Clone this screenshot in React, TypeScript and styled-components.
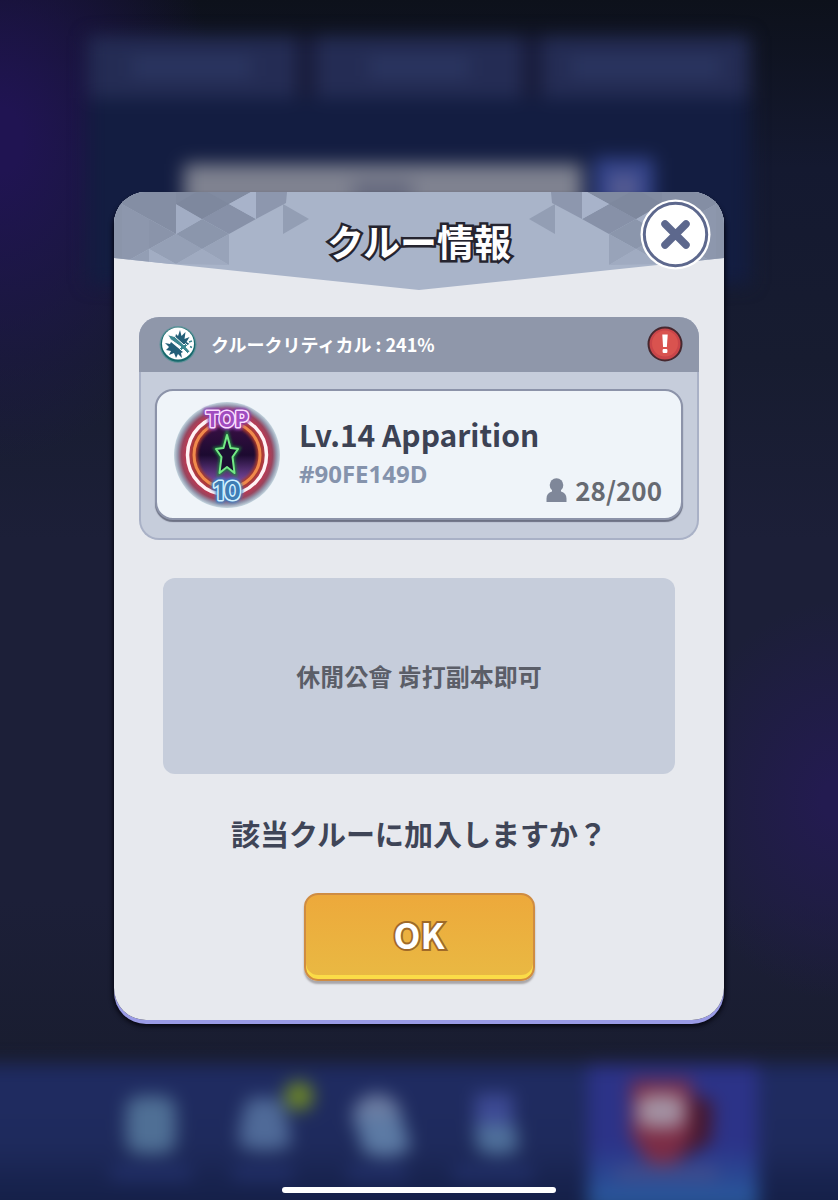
import React from "react";
import styled, { createGlobalStyle } from "styled-components";

const jp = `"Noto Sans CJK JP", "Noto Sans", sans-serif`;
const tc = `"Noto Sans CJK TC", "Noto Sans", sans-serif`;

const GlobalStyle = createGlobalStyle`
  *, *::before, *::after { box-sizing: border-box; }
  body { margin: 0; background: #181b35; font-family: ${jp}; }
  h1, h2, p { margin: 0; }
  button { font: inherit; padding: 0; cursor: pointer; }
`;

const Page = styled.div`
  display: grid;
  grid-template-columns: minmax(0, 1fr);
  min-height: 100vh;
  overflow: hidden;
  background:
    radial-gradient(ellipse 220px 320px at 0 140px, #201452 10%, transparent),
    radial-gradient(ellipse 160px 200px at 100% 800px, #231b50 10%, transparent),
    linear-gradient(#0d111b 0, #141930 14%, #171c30 30%, #1c1f38 45%, #1c1f38 75%, #191d30 88%);
`;

const Scene = styled.div`
  grid-area: 1 / 1;
  display: flex;
  flex-direction: column;
  justify-content: space-between;
  filter: blur(9px);
`;

const Lobby = styled.div`
  width: 79%;
  margin: 36px auto 0;
  background: #131d41;
  padding-bottom: 64px;
`;

const Tabs = styled.div`
  display: grid;
  grid-template-columns: repeat(3, 1fr);
  gap: 18px;
  background: #171a38;
`;

const Tab = styled.div`
  display: grid;
  place-items: center;
  height: 62px;
  background: #242c54;
`;

const TabLabel = styled.span<{ $width: number }>`
  width: ${(p) => p.$width}px;
  height: 20px;
  background: #2b3661;
`;

const SearchRow = styled.div`
  display: flex;
  justify-content: center;
  gap: 12px;
  margin-top: 66px;
`;

const SearchField = styled.div`
  display: grid;
  place-items: center;
  width: 60%;
  height: 56px;
  background: #7f8290;
`;

const SearchText = styled.span`
  width: 60px;
  height: 20px;
  background: #62667c;
`;

const SearchGo = styled.div`
  display: grid;
  place-items: center;
  width: 60px;
  height: 60px;
  margin-top: -6px;
  background: #33438a;
`;

const SearchGlyph = styled.span`
  width: 28px;
  height: 28px;
  background: #565c92;
`;

const Nav = styled.div`
  display: flex;
  justify-content: center;
  align-items: stretch;
  height: 148px;
  margin: 0 -24px -12px;
  padding-left: 14px;
  background: linear-gradient(#1f2b62 0, #1e2a5c 55%, #16214b 85%);
`;

const NavItem = styled.div<{ $active?: boolean }>`
  display: flex;
  justify-content: center;
  width: ${(p) => (p.$active ? 170 : 114)}px;
  margin-left: ${(p) => (p.$active ? 38 : 0)}px;
  padding: ${(p) => (p.$active ? "16px 12px 0 0" : "26px 0 0")};
  background: ${(p) => (p.$active ? "linear-gradient(#2c3388 0 55%, #29569a 90%)" : "none")};
`;

const HomeBar = styled.div`
  grid-area: 1 / 1;
  place-self: end center;
  width: 274px;
  height: 6px;
  margin-bottom: 7px;
  border-radius: 3px;
  background: #fff;
  z-index: 1;
`;

const Overlay = styled.div`
  grid-area: 1 / 1;
  display: flex;
  align-items: center;
  justify-content: center;
  padding: 12px 24px 0;
  z-index: 1;
`;

const DialogEdge = styled.div`
  width: 100%;
  max-width: 610px;
  border-radius: 32px;
  box-shadow: 0 4px 0 #9a9be6, 0 5px 5px 1px #04040e;
`;

const Dialog = styled.section`
  border-radius: 32px;
  background: #e7e9ee;
  overflow: hidden;
`;

const Header = styled.header`
  position: relative;
  display: grid;
  grid-template-columns: minmax(0, 1fr);
  height: 98px;
`;

const HeaderArt = styled.svg`
  grid-area: 1 / 1;
  width: 100%;
  height: 98px;
`;

const Title = styled.h1`
  grid-area: 1 / 1;
  place-self: center;
  font-size: 37px;
  line-height: 56px;
  font-weight: 700;
  color: #fff;
  -webkit-text-stroke: 5px #25242f;
  paint-order: stroke fill;
  stroke-linejoin: round;
`;

const CloseButton = styled.button`
  position: absolute;
  top: 7px;
  right: 13px;
  width: 71px;
  height: 71px;
  border: 0;
  background: none;
  svg { display: block; }
`;

const Body = styled.div`
  display: flex;
  flex-direction: column;
  align-items: center;
  padding: 27px 25px 39px;
`;

const Panel = styled.div`
  width: 100%;
  border: 2px solid #a9b1c6;
  border-top: 0;
  border-radius: 20px;
  background: #c6cddb;
`;

const BuffBar = styled.div`
  display: flex;
  align-items: center;
  gap: 14px;
  height: 55px;
  margin: 0 -2px;
  padding: 0 16px 2px 20px;
  border-radius: 20px 20px 0 0;
  background: #8f97aa;
  color: #fff;
  font-size: 18px;
  font-weight: 700;
  line-height: 24px;
`;

const BuffText = styled.p`
  flex: 1;
`;

const AlertButton = styled.button`
  width: 36px;
  height: 36px;
  border: 0;
  background: none;
  svg { display: block; }
`;

const CrewCard = styled.div`
  display: flex;
  align-items: center;
  gap: 19px;
  margin: 17px 14px 18px;
  height: 131px;
  padding: 0 19px 0 17px;
  border: 2px solid #8c93a9;
  border-radius: 18px;
  background: #eff4f9;
  box-shadow: 0 2px 1px #6c7183;
`;

const CrewText = styled.div`
  flex: 1;
  min-width: 0;
  align-self: stretch;
  padding-top: 24px;
`;

const CrewName = styled.h2`
  font-size: 30px;
  font-weight: 700;
  line-height: 38px;
  color: #3c4254;
`;

const CrewMeta = styled.div`
  display: flex;
  justify-content: space-between;
  height: 54px;
`;

const CrewTag = styled.p`
  font-family: "Open Sans", sans-serif;
  font-size: 24px;
  font-weight: 700;
  line-height: 42px;
  color: #8593ac;
`;

const Members = styled.p`
  align-self: flex-end;
  display: flex;
  align-items: center;
  gap: 8px;
  font-size: 26px;
  font-weight: 700;
  line-height: 34px;
  color: #666a72;
`;

const Message = styled.div`
  display: grid;
  place-items: center;
  width: calc(100% - 48px);
  height: 196px;
  margin-top: 38px;
  padding: 0 16px;
  border-radius: 12px;
  background: #c6cddb;
  color: #5b5e68;
  font-family: ${tc};
  font-size: 24px;
  font-weight: 700;
  line-height: 36px;
`;

const Question = styled.p`
  margin-top: 39px;
  font-size: 29px;
  font-weight: 700;
  line-height: 40px;
  color: #3f4557;
  text-align: center;
`;

const OkButton = styled.button`
  width: 231px;
  height: 88px;
  margin-top: 40px;
  padding-bottom: 6px;
  border: 2px solid #cf8c42;
  border-radius: 14px;
  background: linear-gradient(#eda93b, #e9b943);
  box-shadow: inset 0 -4px 0 #fbdc47, 0 3px 2px #a9a6a8;
  color: #fff;
  font-size: 35px;
  font-weight: 700;
  line-height: 40px;
  -webkit-text-stroke: 4px #a06a28;
  paint-order: stroke fill;
`;

const facets: [string, string][] = [
  ["0,0 35,0 35,27 8,12 8,72 0,72", "#8b95aa"],
  ["8,0 62,0 62,42 8,12", "#848ea4"],
  ["62,0 70,0 88,-3 62,12", "#7f899f"],
  ["8,12 35,27 35,57 8,72", "#8d97ad"],
  ["35,27 62,42 35,57", "#8a94aa"],
  ["8,72 35,57 35,72", "#939eb4"],
  ["35,57 62,42 88,57 62,72", "#95a0b6"],
  ["35,57 62,72 35,72", "#a2adc3"],
  ["62,0 137,0 88,27 62,12", "#818ba1"],
  ["115,12 142,27 115,42 88,27", "#8791a8"],
  ["62,42 88,27 115,42 88,57", "#8b96ac"],
  ["115,42 115,73 88,57", "#98a3b9"],
  ["62,12 88,27 62,42", "#a2adc4"],
  ["62,72 88,57 115,73", "#a0abc1"],
  ["88,-3 115,12 88,27 62,12", "#7e889e"],
  ["137,0 142,0 142,27 115,12", "#a8b3ca"],
  ["142,0 173,0 172,11 142,27", "#8d97ae"],
  ["169,12 195,27 169,42", "#939eb4"],
];

const FacetSet = () => (
  <>
    {facets.map(([points, fill]) => (
      <polygon key={points} points={points} fill={fill} />
    ))}
  </>
);

const HeaderBackdrop = () => (
  <HeaderArt viewBox="0 0 610 98" preserveAspectRatio="none" aria-hidden="true">
    <clipPath id="banner">
      <path d="M0 0H610V66L305 98L0 66Z" />
    </clipPath>
    <g clipPath="url(#banner)">
      <rect width="610" height="98" fill="#a9b4c9" />
      <FacetSet />
      <g transform="translate(610 0) scale(-1 1)">
        <FacetSet />
      </g>
    </g>
  </HeaderArt>
);

const CloseIcon = () => (
  <svg width="71" height="71" viewBox="0 0 71 71" aria-hidden="true">
    <circle cx="35.5" cy="35.5" r="35" fill="#fff" />
    <circle cx="35.5" cy="35.5" r="31.2" fill="none" stroke="#5d688d" strokeWidth="3" />
    <path d="M25 25L46 46M46 25L25 46" stroke="#5d688d" strokeWidth="7.5" strokeLinecap="round" />
  </svg>
);

const CriticalIcon = () => (
  <svg width="38" height="38" viewBox="0 0 38 38" aria-hidden="true">
    <circle cx="19" cy="19.5" r="18.5" fill="#3f8f90" opacity=".6" />
    <circle cx="19" cy="19.5" r="17.3" fill="#17686c" />
    <circle cx="19" cy="18.5" r="16" fill="#fff" />
    <path d="M16 13l1-4 2 2 2-6 1.500 6 4-4-1 7 5-2-3 5 3 2-5 2-4-1-3-4z" fill="#245f78" />
    <path d="M6 18l5 1 1-2 12 10-2 1 1 5-4-4-2 4-2-5-5 2 2-4-5-1 3-3z" fill="#245f78" />
    <path
      d="M8.500 9.500l7 2 9.500 8.500 1.500-1.500 2 2-1.500 1.500 4 4.500-2.500 2-4.500-4.500-1.500 1.500-2-2 1.500-1.500-10.500-7.500z"
      fill="#3c8791"
      stroke="#fff"
      strokeWidth="1"
    />
    <path d="M30 17l3-1M31 21.500l2 1" stroke="#3c8791" strokeWidth="1.5" />
  </svg>
);

const AlertIcon = () => (
  <svg width="36" height="36" viewBox="0 0 36 36" aria-hidden="true">
    <circle cx="18" cy="18" r="16.5" fill="#c94549" stroke="#46282f" strokeWidth="2" />
    <circle cx="18" cy="17.500" r="13" fill="#d9534f" />
    <path d="M15.300 8.500h5.400l-.8 12.500h-3.800z" fill="#fff" />
    <rect x="15.600" y="23" width="4.800" height="4" rx="1" fill="#fff" />
  </svg>
);

const PersonIcon = () => (
  <svg width="21" height="24" viewBox="0 0 21 24" aria-hidden="true">
    <circle cx="10.5" cy="7" r="6.8" fill="#7f8799" />
    <path d="M6 10h9v3.500c3.500 1 5.500 3.500 5.500 7V24H.5v-3.500c0-3.500 2-6 5.500-7z" fill="#7f8799" />
  </svg>
);

const neon: React.CSSProperties = { paintOrder: "stroke" };
const star = "M53 33L56.500 46L64 47L58.500 55L60.500 71L53 65L45.500 71L47.500 55L42 47L49.500 46Z";

const Emblem = () => (
  <svg width="106" height="106" viewBox="0 0 106 106" role="img" aria-label="TOP 10">
    <defs>
      <radialGradient id="halo">
        <stop offset=".8" stopColor="#b23c55" />
        <stop offset=".86" stopColor="#99465f" />
        <stop offset=".93" stopColor="#9394aa" />
        <stop offset="1" stopColor="#c3d5df" />
      </radialGradient>
      <linearGradient id="core" x1="0" y1="0" x2="0" y2="1">
        <stop offset="0" stopColor="#3a1045" />
        <stop offset=".5" stopColor="#1c0a30" />
        <stop offset=".85" stopColor="#6c4090" />
        <stop offset="1" stopColor="#8a5aa0" />
      </linearGradient>
      <filter id="glow" x="-30%" y="-30%" width="160%" height="160%">
        <feGaussianBlur stdDeviation="1.5" />
      </filter>
    </defs>
    <circle cx="53" cy="53" r="53" fill="url(#halo)" />
    <circle cx="53" cy="53" r="32" fill="url(#core)" />
    <circle cx="53" cy="53" r="33" fill="none" stroke="#a83a2c" strokeWidth="7" filter="url(#glow)" />
    <circle cx="53" cy="53" r="39.5" fill="none" stroke="#fff2f4" strokeWidth="3.5" />
    <circle cx="53" cy="53" r="33" fill="none" stroke="#f08a4c" strokeWidth="3" />
    <path d={star} fill="none" stroke="#1f8a3a" strokeWidth="4" filter="url(#glow)" />
    <path d={star} fill="#1a1030" stroke="#74e886" strokeWidth="2" strokeLinejoin="round" />
    <g fontFamily="Inter, sans-serif" fontWeight="700" textAnchor="middle" strokeLinejoin="round">
      <text x="53" y="25" fontSize="21" fill="#8b3fb0" stroke="#8a3cae" strokeWidth="6" style={neon} filter="url(#glow)">TOP</text>
      <text x="53" y="25" fontSize="21" fill="#a04cc0" stroke="#fbdcff" strokeWidth="3" style={neon} aria-hidden="true">TOP</text>
      <text x="53" y="98" fontSize="25" fill="#2f72b8" stroke="#3580c8" strokeWidth="6" style={neon} filter="url(#glow)">10</text>
      <text x="53" y="98" fontSize="25" fill="#3f7db4" stroke="#d2f1ff" strokeWidth="3" style={neon} aria-hidden="true">10</text>
    </g>
  </svg>
);

const NavArt = ({ children, width = 80 }: { children: React.ReactNode; width?: number }) => (
  <svg width={width} height="100" viewBox={`0 0 ${width} 100`} aria-hidden="true" overflow="visible">
    {children}
  </svg>
);

export default function App() {
  return (
    <>
      <GlobalStyle />
      <Page>
        <Scene aria-hidden="true">
          <Lobby>
            <Tabs>
              <Tab><TabLabel $width={120} /></Tab>
              <Tab><TabLabel $width={100} /></Tab>
              <Tab><TabLabel $width={150} /></Tab>
            </Tabs>
            <SearchRow>
              <SearchField><SearchText /></SearchField>
              <SearchGo><SearchGlyph /></SearchGo>
            </SearchRow>
          </Lobby>
          <Nav>
            <NavItem>
              <NavArt>
                <rect x="15" y="6" width="50" height="58" rx="14" fill="#4f6f95" />
                <rect x="0" y="76" width="80" height="14" fill="#22306a" />
              </NavArt>
            </NavItem>
            <NavItem>
              <NavArt>
                <path d="M24 8H54Q64 26 66 56Q40 66 14 56Q14 26 24 8Z" fill="#4f6a98" />
                <circle cx="74" cy="6" r="14" fill="#718c24" />
                <rect x="8" y="76" width="60" height="14" fill="#22306a" />
              </NavArt>
            </NavItem>
            <NavItem>
              <NavArt>
                <ellipse cx="38" cy="26" rx="24" ry="22" fill="#6d7da2" />
                <path d="M16 26H62L72 58Q52 74 24 62Z" fill="#5c7aa4" />
                <rect x="8" y="76" width="60" height="14" fill="#22306a" />
              </NavArt>
            </NavItem>
            <NavItem>
              <NavArt>
                <path d="M22 4H60V38H22Z" fill="#3d4a94" />
                <path d="M22 34H62L66 60Q44 70 24 60Z" fill="#4f709b" />
                <rect x="0" y="76" width="80" height="14" fill="#22306a" />
              </NavArt>
            </NavItem>
            <NavItem $active>
              <NavArt width={100}>
                <path d="M60 10L96 22L94 62L62 80Z" fill="#44172f" />
                <path d="M14 0H74V56L58 84H32L14 56Z" fill="#7c2c45" />
                <rect x="20" y="14" width="48" height="34" rx="12" fill="#a391a2" />
                <rect x="0" y="86" width="100" height="14" fill="#414d8c" />
              </NavArt>
            </NavItem>
          </Nav>
        </Scene>

        <Overlay>
          <DialogEdge>
            <Dialog role="dialog" aria-labelledby="dialog-title">
              <Header>
                <HeaderBackdrop />
                <Title id="dialog-title">クルー情報</Title>
                <CloseButton type="button" aria-label="閉じる">
                  <CloseIcon />
                </CloseButton>
              </Header>
              <Body>
                <Panel>
                  <BuffBar>
                    <CriticalIcon />
                    <BuffText>クルークリティカル : 241%</BuffText>
                    <AlertButton type="button" aria-label="通報">
                      <AlertIcon />
                    </AlertButton>
                  </BuffBar>
                  <CrewCard>
                    <Emblem />
                    <CrewText>
                      <CrewName>Lv.14 Apparition</CrewName>
                      <CrewMeta>
                        <CrewTag>#90FE149D</CrewTag>
                        <Members>
                          <PersonIcon />
                          28/200
                        </Members>
                      </CrewMeta>
                    </CrewText>
                  </CrewCard>
                </Panel>
                <Message lang="zh-Hant">休閒公會 肯打副本即可</Message>
                <Question>該当クルーに加入しますか？</Question>
                <OkButton type="button">OK</OkButton>
              </Body>
            </Dialog>
          </DialogEdge>
        </Overlay>
        <HomeBar />
      </Page>
    </>
  );
}
